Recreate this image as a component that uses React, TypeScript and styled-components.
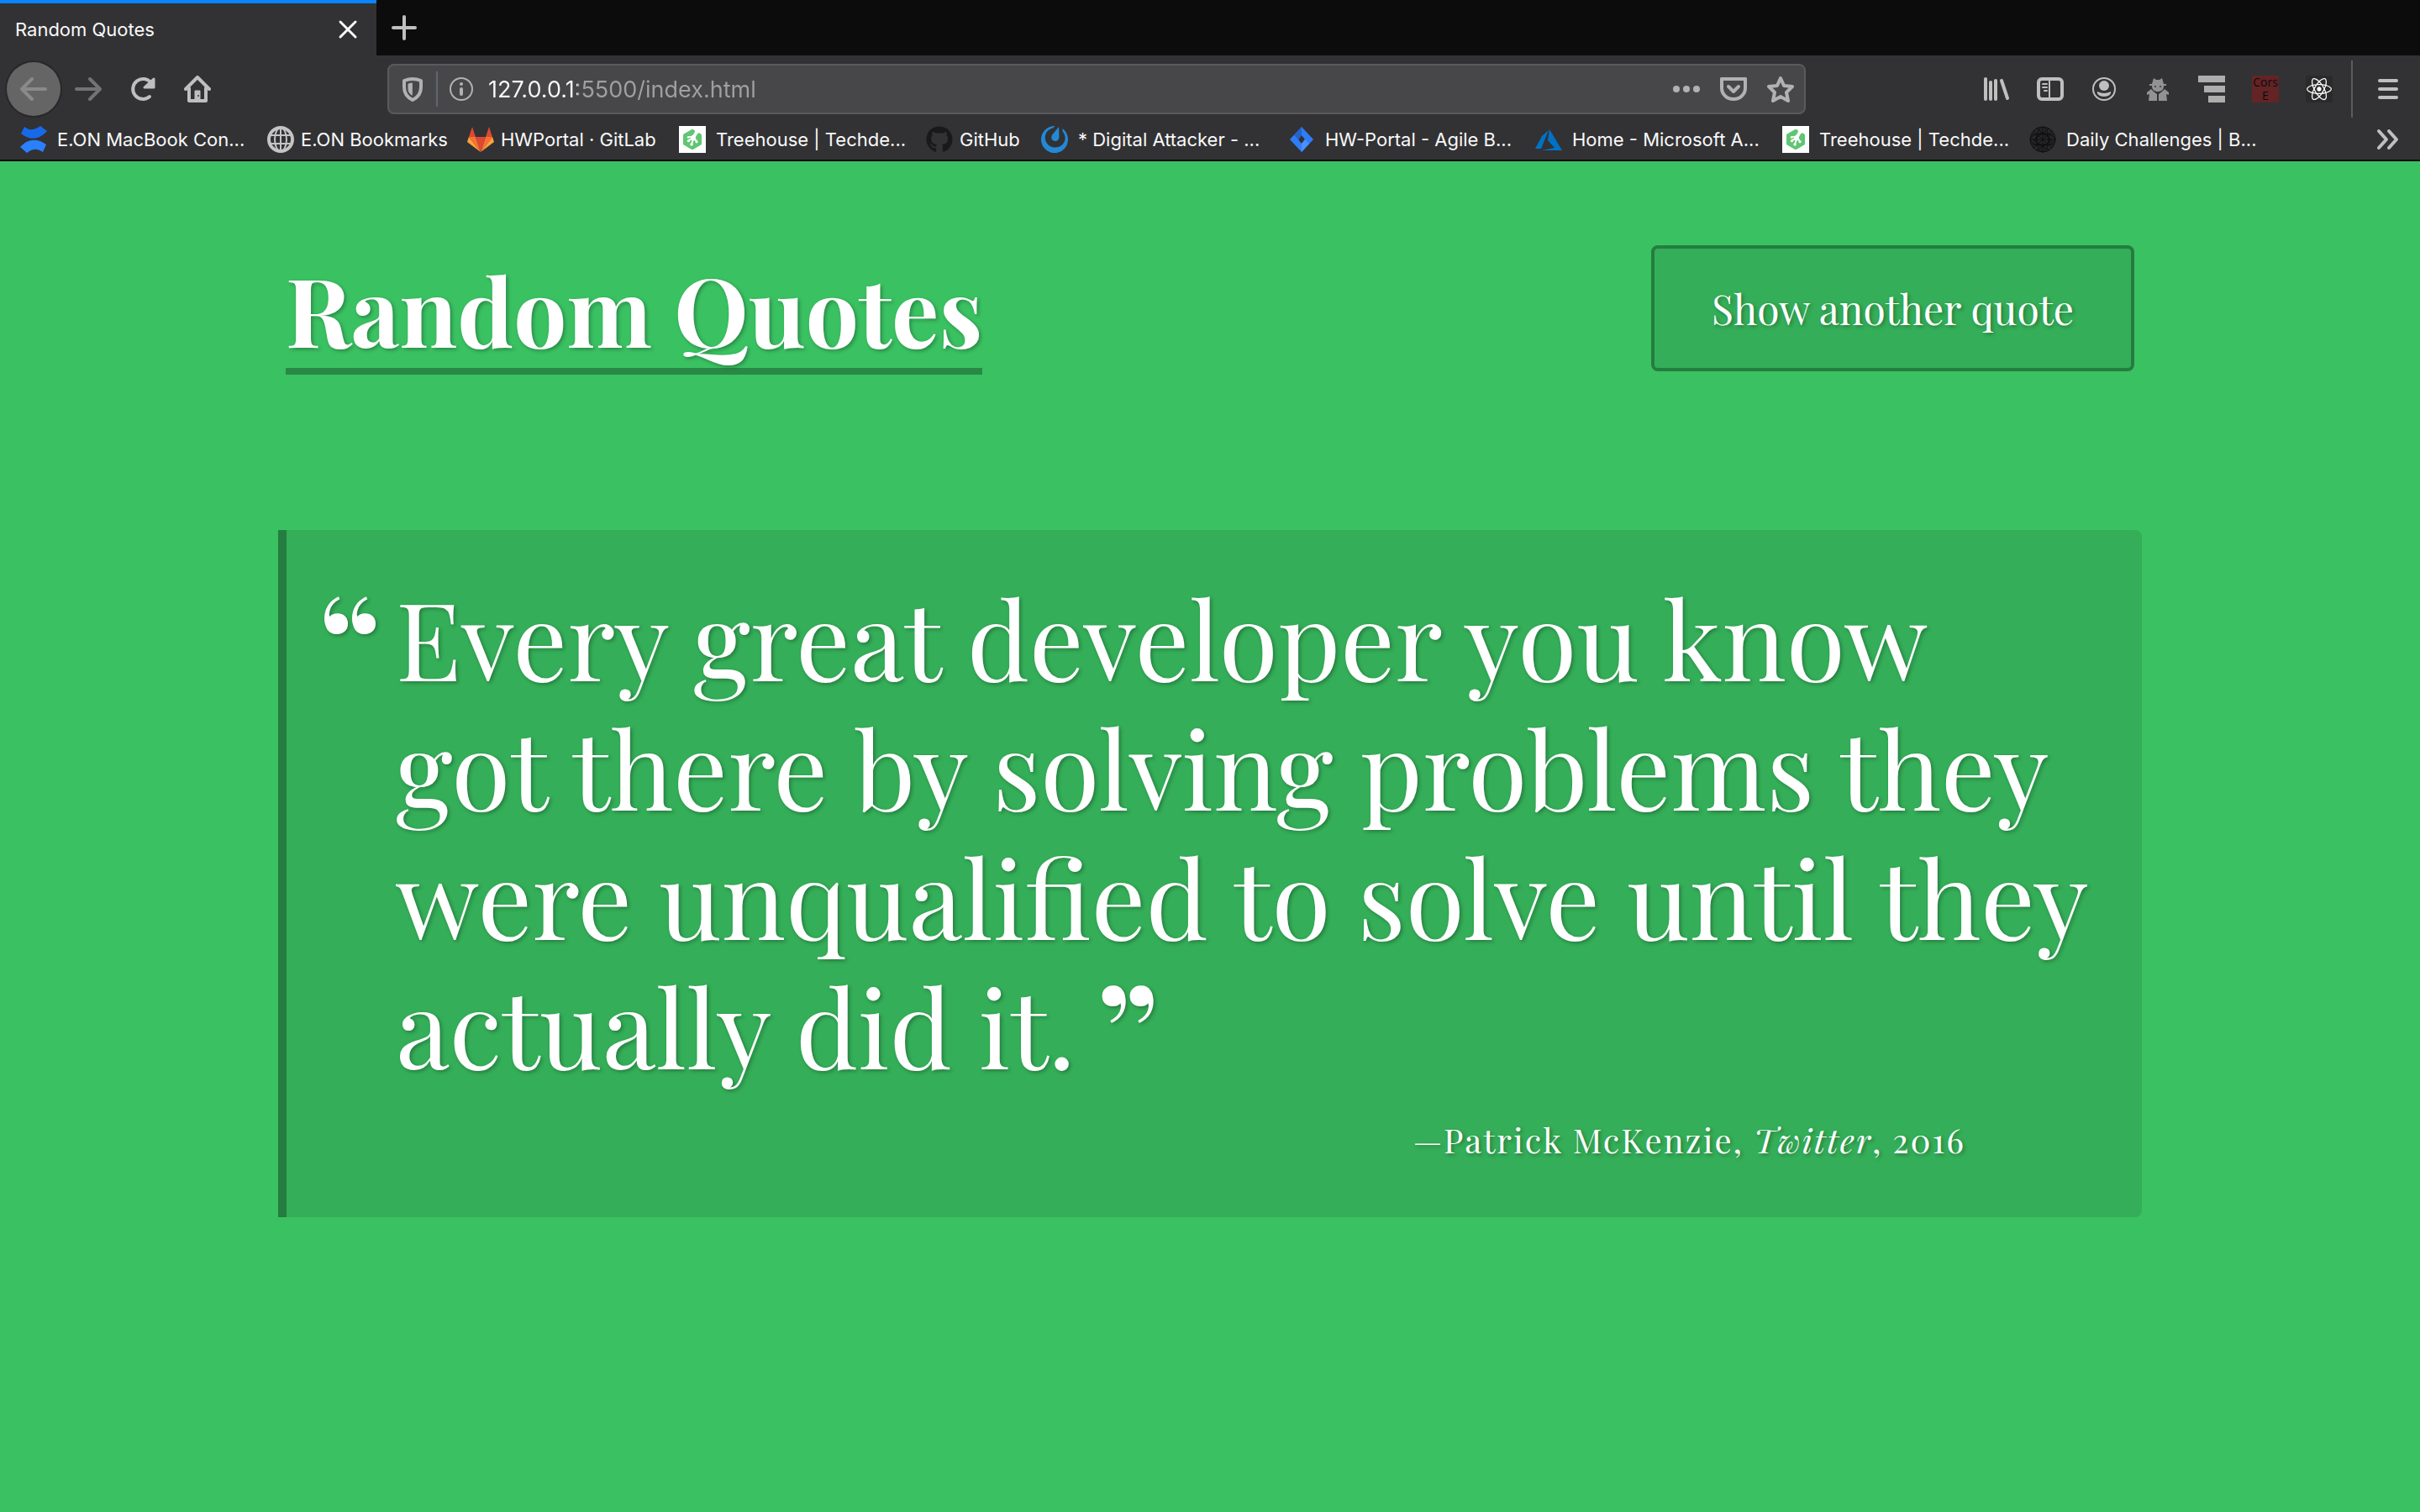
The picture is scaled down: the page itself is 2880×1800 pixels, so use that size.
import React from 'react';
import styled, { createGlobalStyle, css } from 'styled-components';
import { FaGithub, FaReact } from 'react-icons/fa';
import { SiMattermost, SiTreehouse } from 'react-icons/si';

const uiFont = `Inter, Roboto, sans-serif`;
const serifFont = `'Playfair Display', 'Liberation Serif', serif`;

const GlobalStyle = createGlobalStyle`
  *, *::before, *::after { box-sizing: border-box; }
  body { margin: 0; background: #3ac162; }
  button { border: 0; padding: 0; background: none; font: inherit; color: inherit; }
  svg { display: block; flex: none; }
`;

const Chrome = styled.header`
  background: #323234;
  border-bottom: 2px solid #0c0c0d;
  font-family: ${uiFont};
  color: #f9f9fa;
`;

const TabStrip = styled.div`
  display: flex;
  height: 66px;
  background: #0c0c0d;
`;

const Tab = styled.div`
  display: flex;
  align-items: center;
  justify-content: space-between;
  width: 448px;
  padding: 0 16px 0 18px;
  border-top: 4px solid #0a84ff;
  background: #323234;
  font-size: 22px;
  line-height: 32px;
`;

const IconButton = styled.button<{ $size?: number; $tone?: string }>`
  display: flex;
  flex: none;
  align-items: center;
  justify-content: center;
  width: ${(p) => p.$size ?? 64}px;
  height: ${(p) => p.$size ?? 64}px;
  color: ${(p) => p.$tone ?? '#bfbfc0'};
`;

const BackButton = styled(IconButton)`
  border-radius: 50%;
  background: #656565;
  box-shadow: 0 0 0 2px #28282a;
`;

const NavBar = styled.nav`
  display: flex;
  align-items: center;
  height: 80px;
  padding: 0 6px 0 8px;
`;

const NavGroup = styled.div<{ $gap?: number }>`
  display: flex;
  flex: none;
  gap: ${(p) => p.$gap ?? 0}px;
`;

const UrlBar = styled.div`
  display: flex;
  flex: 1;
  align-items: center;
  height: 60px;
  margin: 0 195px 0 194px;
  padding: 0 0 0 12px;
  border: 2px solid #5a5a5c;
  border-radius: 8px;
  background: #474749;
  color: #b1b1b3;
`;

const UrlDivider = styled.span`
  width: 2px;
  height: 42px;
  margin: 0 12px;
  background: #5f6670;
`;

const UrlInput = styled.input`
  flex: 1;
  min-width: 0;
  margin-left: 16px;
  padding: 2px 0 0;
  border: 0;
  outline: 0;
  background: linear-gradient(90deg, #f9f9fa 106px, #a0a0a2 106px);
  background-clip: text;
  -webkit-background-clip: text;
  color: transparent;
  caret-color: #f9f9fa;
  font-family: ${uiFont};
  font-size: 27px;
  line-height: 40px;
`;

const UrlActions = styled.div`
  display: flex;
`;

const CorsBadge = styled.span`
  display: flex;
  align-items: center;
  justify-content: center;
  width: 32px;
  height: 32px;
  background: #642325;
  color: #0c0c0d;
  font-family: 'Open Sans', sans-serif;
  font-size: 14px;
  line-height: 16px;
  text-align: center;
`;

const ReactBadge = styled.span`
  display: flex;
  align-items: center;
  justify-content: center;
  width: 32px;
  height: 32px;
  border-radius: 2px;
  background: #2a2a2b;
  color: #fff;
`;

const NavDivider = styled.span`
  width: 2px;
  height: 68px;
  margin: 0 10px 0 6px;
  background: #5c5c5e;
`;

const BookmarkBar = styled.div`
  display: flex;
  align-items: center;
  justify-content: space-between;
  height: 44px;
  padding: 0 18px 4px 24px;
`;

const BookmarkList = styled.ul`
  display: flex;
  margin: 0;
  padding: 0;
  list-style: none;
`;

const BookmarkItem = styled.li<{ $width: number }>`
  flex: none;
  width: ${(p) => p.$width}px;
`;

const BookmarkLink = styled.a<{ $tight: boolean }>`
  display: flex;
  align-items: center;
  gap: ${(p) => (p.$tight ? 8 : 12)}px;
  color: inherit;
  font-size: 22px;
  line-height: 32px;
  text-decoration: none;
  white-space: nowrap;
`;

const shadow = css`
  text-shadow: 2px 2px 4px rgba(0, 0, 0, 0.3);
`;

const Page = styled.main`
  width: 100%;
  max-width: 2218px;
  margin: 0 auto;
  padding: 100px 0;
  color: #fff;
  font-family: ${serifFont};
`;

const PageHeader = styled.div`
  display: flex;
  align-items: flex-start;
  justify-content: space-between;
  padding: 0 9px;
`;

const Title = styled.h1`
  margin: 6px 0 0;
  border-bottom: 8px solid #298843;
  font-size: 112px;
  font-weight: 700;
  line-height: 140px;
  ${shadow}
`;

const QuoteButton = styled.button`
  height: 150px;
  padding: 0 68px;
  border: 4px solid #247d40;
  border-radius: 8px;
  background: #34ae58;
  color: #fff;
  font-family: ${serifFont};
  font-size: 48px;
  line-height: 60px;
  ${shadow}
`;

const QuoteBox = styled.figure`
  margin: 185px 0 0;
  padding: 50px 50px 62px 130px;
  border-left: 10px solid #247d40;
  border-radius: 0 8px 8px 0;
  background: #34ae58;
`;

const Quote = styled.blockquote`
  margin: 0;
  font-size: 128px;
  line-height: 154px;
  text-indent: -92px;
  ${shadow}
`;

const Mark = styled.span<{ $closing?: boolean }>`
  display: inline-block;
  font-size: 160px;
  font-weight: 700;
  line-height: 0;
  text-indent: 0;
  vertical-align: -16px;
  ${(p) => (p.$closing ? 'margin-left: 26px;' : 'width: 92px;')}
`;

const Source = styled.figcaption`
  margin-top: 30px;
  padding-right: 160px;
  font-size: 40px;
  letter-spacing: 2px;
  line-height: 60px;
  text-align: right;
  ${shadow}
`;

type DrawProps = { children: React.ReactNode; size?: number };

const Line = ({ children, size = 32 }: DrawProps) => (
  <svg width={size} height={size} viewBox="0 0 32 32" fill="none" stroke="currentColor" strokeWidth="4" strokeLinecap="round" strokeLinejoin="round" aria-hidden="true">
    {children}
  </svg>
);

const Solid = ({ children, size = 32 }: DrawProps) => (
  <svg width={size} height={size} viewBox="0 0 32 32" fill="currentColor" aria-hidden="true">
    {children}
  </svg>
);

const CloseIcon = () => <Line><path d="M7 7l18 18M25 7L7 25" strokeWidth="3" /></Line>;
const PlusIcon = () => <Line><path d="M16 3v26M3 16h26" strokeWidth="4" /></Line>;
const BackIcon = () => <Line><path d="M30 16H2M14 4L2 16l12 12" /></Line>;
const ForwardIcon = () => <Line><path d="M2 16h28M18 4l12 12-12 12" /></Line>;
const ReloadIcon = () => (
  <Line>
    <path d="M24 25A12 12 0 1 1 26 9" />
    <path d="M29 4v10H18z" fill="currentColor" strokeWidth="3" />
  </Line>
);
const HomeIcon = () => (
  <Line>
    <path d="M2 16L16 2l14 14M6 15v15h20V15" />
    <path d="M13 30V18h6v12" fill="currentColor" strokeWidth="1" />
    <circle cx="17" cy="24" r="1" fill="#323234" stroke="none" />
  </Line>
);
const ShieldIcon = () => (
  <Line>
    <path d="M6 6q10-4 20 0v8c0 8-4 12-10 15C10 26 6 22 6 14z" />
    <path d="M15 9l-4 1v5c0 4 1 6 4 8z" fill="currentColor" strokeWidth="1" />
  </Line>
);
const InfoIcon = () => (
  <Line>
    <circle cx="16" cy="16" r="13" strokeWidth="2" />
    <path d="M16 16v6" />
    <circle cx="16" cy="10" r="2" fill="currentColor" stroke="none" />
  </Line>
);
const DotsIcon = () => (
  <Solid><circle cx="4" cy="16" r="4" /><circle cx="16" cy="16" r="4" /><circle cx="28" cy="16" r="4" /></Solid>
);
const PocketIcon = () => (
  <Line>
    <path d="M2 4h28v11a14 13 0 0 1-28 0z" />
    <path d="M2 4h28" />
    <path d="M10 13l6 6 6-6" />
  </Line>
);
const StarIcon = () => (
  <Line><path d="M16 3l4 9 10 1-7 7 2 10-9-5-9 5 2-10-7-7 10-1z" /></Line>
);
const LibraryIcon = () => (
  <Line><path d="M3 4v24M9 8v20M15 6v22M22 6l7 21" /></Line>
);
const SidebarIcon = () => (
  <Line>
    <rect x="2" y="4" width="28" height="24" rx="4" />
    <path d="M15 5v22" strokeWidth="2" />
    <path d="M7 10h5M7 14h5M9 18h3" strokeWidth="2" />
  </Line>
);
const AccountIcon = () => (
  <Line>
    <circle cx="16" cy="16" r="13" strokeWidth="2" />
    <circle cx="16" cy="12" r="6" fill="currentColor" stroke="none" />
    <path d="M8 19q8 4 16 0c1 3-3 6-8 6s-9-3-8-6z" fill="currentColor" stroke="none" />
  </Line>
);
const SpyIcon = () => (
  <Solid>
    <path d="M11 3l3 2h4l3-2 2 7h3v2H6v-2h3z" />
    <path d="M9 12h14c0 5-3 7-7 7s-7-2-7-7z" />
    <circle cx="13" cy="13" r="1" fill="#323234" />
    <circle cx="19" cy="13" r="1" fill="#323234" />
    <path d="M3 20l5-4 3 3 4 3v8H5l1-8-3 1zM29 20l-5-4-3 3-4 3v8h10l-1-8 3 1z" />
  </Solid>
);
const StackIcon = () => (
  <Solid><path d="M0 0h32v8H0zM7 12h25v8H7zM12 24h20v8H12z" /></Solid>
);
const MenuIcon = () => <Line><path d="M6 6h20M6 16h20M6 26h20" /></Line>;
const ChevronsIcon = () => <Line><path d="M5 6l9 10-9 10M17 6l9 10-9 10" /></Line>;

const ConfluenceIcon = () => (
  <Solid>
    <path d="M5 1c6 4 10 5 19-1l8 6C23 16 12 18 1 9z" fill="#1769e8" />
    <path d="M27 31c-6-4-11-5-19 1L0 25C9 15 20 14 31 22z" fill="#2a80ff" />
  </Solid>
);
const GlobeIcon = () => (
  <Line>
    <circle cx="16" cy="16" r="14" stroke="#c4c4c5" />
    <path d="M3 11h26M3 21h26M16 2v28" stroke="#c4c4c5" strokeWidth="2" />
    <ellipse cx="16" cy="16" rx="7" ry="14" stroke="#c4c4c5" strokeWidth="2" />
  </Line>
);
const GitLabIcon = () => (
  <Solid>
    <path d="M16 31L0 19l2-6z" fill="#fca33a" /><path d="M16 31l16-12-2-6z" fill="#fca33a" />
    <path d="M16 31L2 13h8z" fill="#fc7038" /><path d="M16 31l14-18h-8z" fill="#fc7038" />
    <path d="M16 31l-6-18h12zM2 13L6 1l4 12zM30 13L26 1l-4 12z" fill="#db4a30" />
  </Solid>
);
const TreehouseBadge = styled.span`
  display: flex;
  flex: none;
  align-items: center;
  justify-content: center;
  width: 32px;
  height: 32px;
  background: #fff;
  color: #5fc672;
`;
const JiraIcon = () => (
  <Solid>
    <path d="M16 1l14 15-14 15L2 16zM16 11l-4 5 4 5 4-5z" fill="#2f7df6" fillRule="evenodd" />
    <path d="M16 1v10l-4 5-5-5z" fill="#2563c9" />
    <path d="M16 31V21l4-5 5 5z" fill="#4a90ff" />
  </Solid>
);
const AzureIcon = () => (
  <Solid>
    <path d="M16 5L8 12 0 27h7z" fill="#0072c6" />
    <path d="M17 4l15 25H8l15-3-8-9z" fill="#0072c6" />
  </Solid>
);
const SphereIcon = () => (
  <Line>
    <g stroke="#101011" strokeWidth="1">
      <circle cx="16" cy="16" r="15" fill="#262628" />
      <ellipse cx="16" cy="16" rx="7" ry="15" />
      <ellipse cx="16" cy="16" rx="15" ry="7" />
      <path d="M16 1v30M1 16h30M5 6l22 20M27 6L5 26M9 3l18 14-18 12M23 3L5 17l18 12M4 10h24M4 22h24" />
      <circle cx="16" cy="16" r="8" />
    </g>
  </Line>
);
const TreehouseIcon = () => <TreehouseBadge><SiTreehouse size={24} /></TreehouseBadge>;

const bookmarks = [
  { label: 'E.ON MacBook Con...', width: 294, icon: <ConfluenceIcon /> },
  { label: 'E.ON Bookmarks', width: 238, icon: <GlobeIcon /> },
  { label: 'HWPortal · GitLab', width: 252, icon: <GitLabIcon /> },
  { label: 'Treehouse | Techde...', width: 294, icon: <TreehouseIcon /> },
  { label: 'GitHub', width: 137, icon: <FaGithub size={32} color="#19191a" /> },
  { label: '* Digital Attacker - ...', width: 294, icon: <SiMattermost size={32} color="#2389d7" /> },
  { label: 'HW-Portal - Agile B...', width: 294, icon: <JiraIcon /> },
  { label: 'Home - Microsoft A...', width: 294, icon: <AzureIcon /> },
  { label: 'Treehouse | Techde...', width: 294, icon: <TreehouseIcon /> },
  { label: 'Daily Challenges | B...', width: 294, icon: <SphereIcon /> },
];

export default function App() {
  return (
    <>
      <GlobalStyle />
      <Chrome>
        <TabStrip>
          <Tab>
            <span>Random Quotes</span>
            <IconButton $size={36} $tone="#f9f9fa" aria-label="Close tab"><CloseIcon /></IconButton>
          </Tab>
          <IconButton $size={66} aria-label="New tab"><PlusIcon /></IconButton>
        </TabStrip>
        <NavBar>
          <NavGroup $gap={1}>
            <BackButton $tone="#8a8a8b" aria-label="Back"><BackIcon /></BackButton>
            <IconButton $tone="#737374" aria-label="Forward"><ForwardIcon /></IconButton>
            <IconButton aria-label="Reload"><ReloadIcon /></IconButton>
            <IconButton aria-label="Home"><HomeIcon /></IconButton>
          </NavGroup>
          <UrlBar>
            <ShieldIcon />
            <UrlDivider />
            <InfoIcon />
            <UrlInput aria-label="Address" defaultValue="127.0.0.1:5500/index.html" />
            <UrlActions>
              <IconButton $size={56} $tone="#b1b1b3" aria-label="Page actions"><DotsIcon /></IconButton>
              <IconButton $size={56} $tone="#b1b1b3" aria-label="Save to Pocket"><PocketIcon /></IconButton>
              <IconButton $size={56} $tone="#b1b1b3" aria-label="Bookmark"><StarIcon /></IconButton>
            </UrlActions>
          </UrlBar>
          <NavGroup>
            <IconButton aria-label="Library"><LibraryIcon /></IconButton>
            <IconButton aria-label="Sidebars"><SidebarIcon /></IconButton>
            <IconButton aria-label="Account"><AccountIcon /></IconButton>
            <IconButton $tone="#929293" aria-label="Private"><SpyIcon /></IconButton>
            <IconButton $tone="#adadae" aria-label="Outline"><StackIcon /></IconButton>
            <IconButton><CorsBadge>Cors E</CorsBadge></IconButton>
            <IconButton aria-label="React tools"><ReactBadge><FaReact size={30} /></ReactBadge></IconButton>
          </NavGroup>
          <NavDivider />
          <IconButton aria-label="Menu"><MenuIcon /></IconButton>
        </NavBar>
        <BookmarkBar>
          <BookmarkList>
            {bookmarks.map((b, i) => (
              <BookmarkItem key={i} $width={b.width}>
                <BookmarkLink href="#" $tight={b.width < 294}>{b.icon}<span>{b.label}</span></BookmarkLink>
              </BookmarkItem>
            ))}
          </BookmarkList>
          <IconButton $size={40} aria-label="More bookmarks"><ChevronsIcon /></IconButton>
        </BookmarkBar>
      </Chrome>
      <Page>
        <PageHeader>
          <Title>Random Quotes</Title>
          <QuoteButton type="button">Show another quote</QuoteButton>
        </PageHeader>
        <QuoteBox>
          <Quote>
            <Mark>“</Mark>Every great developer you know got there by solving problems they were
            unqualified to solve until they actually did it.<Mark $closing>”</Mark>
          </Quote>
          <Source>—Patrick McKenzie, <em>Twitter</em>, 2016</Source>
        </QuoteBox>
      </Page>
    </>
  );
}
